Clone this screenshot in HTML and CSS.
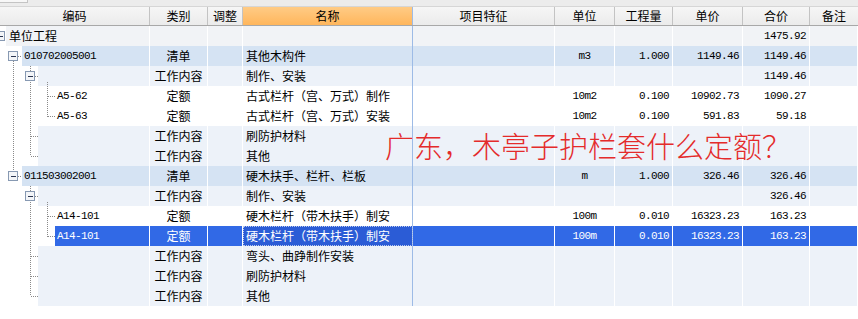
FILE: index.html
```html
<!DOCTYPE html>
<html lang="zh-CN">
<head>
    <meta charset="UTF-8">
    <title>分部分项</title>
    <link rel="stylesheet" href="styles.css">
</head>
<body>
    <div class="topbar"><span class="tab"></span></div>
    <div class="head">
        <div class="h">编码</div>
        <div class="h">类别</div>
        <div class="h">调整</div>
        <div class="h name">名称</div>
        <div class="h">项目特征</div>
        <div class="h">单位</div>
        <div class="h">工程量</div>
        <div class="h">单价</div>
        <div class="h">合价</div>
        <div class="h">备注</div>
    </div>

    <div class="grid">
        <div class="row root">
            <div class="c code"><span class="cv in0 big">单位工程</span></div>
            <div class="c"></div><div class="c"></div><div class="c name"></div><div class="c"></div>
            <div class="c"></div><div class="c"></div><div class="c"></div>
            <div class="c num">1475.92</div><div class="c"></div>
        </div>
        <div class="row qd">
            <div class="c code"><span class="cv in1 mono">010702005001</span></div>
            <div class="c mid">清单</div><div class="c"></div><div class="c name">其他木构件</div><div class="c"></div>
            <div class="c mid mono">m3</div><div class="c num">1.000</div><div class="c num">1149.46</div>
            <div class="c num">1149.46</div><div class="c"></div>
        </div>
        <div class="row gz">
            <div class="c code"><span class="cv in2"></span></div>
            <div class="c mid">工作内容</div><div class="c"></div><div class="c name">制作、安装</div><div class="c"></div>
            <div class="c"></div><div class="c"></div><div class="c"></div>
            <div class="c num">1149.46</div><div class="c"></div>
        </div>
        <div class="row de">
            <div class="c code"><span class="cv in3 mono">A5-62</span></div>
            <div class="c mid">定额</div><div class="c"></div><div class="c name">古式栏杆（宫、万式）制作</div><div class="c"></div>
            <div class="c mid mono">10m2</div><div class="c num">0.100</div><div class="c num">10902.73</div>
            <div class="c num">1090.27</div><div class="c"></div>
        </div>
        <div class="row de">
            <div class="c code"><span class="cv in3 mono">A5-63</span></div>
            <div class="c mid">定额</div><div class="c"></div><div class="c name">古式栏杆（宫、万式）安装</div><div class="c"></div>
            <div class="c mid mono">10m2</div><div class="c num">0.100</div><div class="c num">591.83</div>
            <div class="c num">59.18</div><div class="c"></div>
        </div>
        <div class="row gz">
            <div class="c code"><span class="cv in2"></span></div>
            <div class="c mid">工作内容</div><div class="c"></div><div class="c name">刷防护材料</div><div class="c"></div>
            <div class="c"></div><div class="c"></div><div class="c"></div><div class="c"></div><div class="c"></div>
        </div>
        <div class="row gz">
            <div class="c code"><span class="cv in2"></span></div>
            <div class="c mid">工作内容</div><div class="c"></div><div class="c name">其他</div><div class="c"></div>
            <div class="c"></div><div class="c"></div><div class="c"></div><div class="c"></div><div class="c"></div>
        </div>
        <div class="row qd">
            <div class="c code"><span class="cv in1 mono">011503002001</span></div>
            <div class="c mid">清单</div><div class="c"></div><div class="c name">硬木扶手、栏杆、栏板</div><div class="c"></div>
            <div class="c mid mono">m</div><div class="c num">1.000</div><div class="c num">326.46</div>
            <div class="c num">326.46</div><div class="c"></div>
        </div>
        <div class="row gz">
            <div class="c code"><span class="cv in2"></span></div>
            <div class="c mid">工作内容</div><div class="c"></div><div class="c name">制作、安装</div><div class="c"></div>
            <div class="c"></div><div class="c"></div><div class="c"></div>
            <div class="c num">326.46</div><div class="c"></div>
        </div>
        <div class="row de">
            <div class="c code"><span class="cv in3 mono">A14-101</span></div>
            <div class="c mid">定额</div><div class="c"></div><div class="c name">硬木栏杆（带木扶手）制安</div><div class="c"></div>
            <div class="c mid mono">100m</div><div class="c num">0.010</div><div class="c num">16323.23</div>
            <div class="c num">163.23</div><div class="c"></div>
        </div>
        <div class="row de sel">
            <div class="c code"><span class="cv in3 mono">A14-101</span></div>
            <div class="c mid">定额</div><div class="c"></div><div class="c name focus">硬木栏杆（带木扶手）制安</div><div class="c"></div>
            <div class="c mid mono">100m</div><div class="c num">0.010</div><div class="c num">16323.23</div>
            <div class="c num">163.23</div><div class="c"></div>
        </div>
        <div class="row gz">
            <div class="c code"><span class="cv in2"></span></div>
            <div class="c mid">工作内容</div><div class="c"></div><div class="c name">弯头、曲踭制作安装</div><div class="c"></div>
            <div class="c"></div><div class="c"></div><div class="c"></div><div class="c"></div><div class="c"></div>
        </div>
        <div class="row gz">
            <div class="c code"><span class="cv in2"></span></div>
            <div class="c mid">工作内容</div><div class="c"></div><div class="c name">刷防护材料</div><div class="c"></div>
            <div class="c"></div><div class="c"></div><div class="c"></div><div class="c"></div><div class="c"></div>
        </div>
        <div class="row gz">
            <div class="c code"><span class="cv in2"></span></div>
            <div class="c mid">工作内容</div><div class="c"></div><div class="c name">其他</div><div class="c"></div>
            <div class="c"></div><div class="c"></div><div class="c"></div><div class="c"></div><div class="c"></div>
        </div>

        <!-- tree lines and +/- boxes over the code column -->
        <svg class="tree" width="60" height="280" viewBox="0 0 60 280">
            <path class="dots" d="M13.5 35V145 M18 30.5H22 M18 150.5H22
                M30.5 40V130 M35 50.5H38 M30.5 110.5H38 M30.5 130.5H38
                M47.5 56V90.5 M47.5 70.5H55 M47.5 90.5H55
                M30.5 160V270 M35 170.5H38 M30.5 230.5H38 M30.5 250.5H38 M30.5 270.5H38
                M47.5 176V210.5 M47.5 190.5H55 M47.5 210.5H55"/>
            <g class="box">
                <rect x="-4.5" y="5.5" width="9" height="9"/>
                <rect x="8.5" y="25.5" width="9" height="9"/>
                <rect x="25.5" y="45.5" width="9" height="9"/>
                <rect x="8.5" y="145.5" width="9" height="9"/>
                <rect x="25.5" y="165.5" width="9" height="9"/>
            </g>
            <path class="minus" d="M-2 10.5H3 M11 30.5H16 M28 50.5H33 M11 150.5H16 M28 170.5H33"/>
        </svg>

        <div class="ask">广东，木亭子护栏套什么定额？</div>
    </div>
</body>
</html>
```

FILE: styles.css
```css
body {
    margin: 0;
    width: 858px;
    height: 319px;
    overflow: hidden;
    background: #fff;
    font-family: "Noto Sans CJK SC", sans-serif;
    font-size: 12px;
    color: #000;
}
.topbar {
    height: 6px;
    background: #ececec;
}
.tab {
    display: block;
    width: 27px;
    height: 2px;
    background: #f7f7f7;
    border-right: 1px solid #c4c4c4;
    border-bottom: 1px solid #c4c4c4;
}
.head, .row {
    display: grid;
    grid-template-columns: 150px 58px 35px 170px 142px 60px 58px 70px 67px 48px;
}
.head {
    height: 20px;
    box-sizing: border-box;
    border-top: 1px solid #d6d6d6;
    border-bottom: 1px solid #a8a8a8;
    background: linear-gradient(#f6f6f6, #ebebeb);
}
.h {
    display: flex;
    align-items: center;
    justify-content: center;
    border-right: 1px solid #c3c3c3;
    font-size: 12px;
    line-height: 18px;
}
.h.name {
    background: linear-gradient(#ffcb85, #ffb65c);
    border-right-color: #9dbbe6;
}
.h:last-child {
    border-right: none;
}

/* body rows */
.grid {
    position: relative;
}
.row {
    height: 20px;
    --bg: #fff;
    --fg: #000;
}
.root { --bg: #f1f3f6; }
.qd   { --bg: #d5e3f3; }
.gz   { --bg: #edf2f9; }
.de   { --bg: #fff; }
.sel  { --bg: #3169e6; --fg: #fff; }

.c {
    display: flex;
    align-items: center;
    box-sizing: border-box;
    background: var(--bg);
    color: var(--fg);
    border-right: 1px solid #fff;
    white-space: nowrap;
    overflow: hidden;
    line-height: 20px;
}
.c.code {
    background: transparent;
}
.c.name {
    padding-left: 3px;
    border-right-color: #9dbbe6;
}
.c.focus {
    background: #2b5cd6;
    outline: 1px dotted #b8c8ee;
    outline-offset: -1px;
}
.c.mid {
    justify-content: center;
}
.c.num {
    justify-content: flex-end;
    padding-right: 3px;
    font-family: "Liberation Mono", monospace;
    font-size: 11px;
    letter-spacing: -0.6px;
}
.mono {
    font-family: "Liberation Mono", monospace;
    font-size: 11px;
    letter-spacing: -0.6px;
}
.cv {
    flex: 1;
    height: 20px;
    display: flex;
    align-items: center;
    padding-left: 2px;
    background: var(--bg);
    color: var(--fg);
}
.in0 { margin-left: 6px; padding-left: 3px; }
.in1 { margin-left: 22px; }
.in2 { margin-left: 38px; }
.in3 { margin-left: 55px; }
.de .cv { background: transparent; }
.sel .cv { background: var(--bg); }
.big {
    font-size: 12px;
}

.tree {
    position: absolute;
    left: 0;
    top: 0;
    overflow: visible;
    pointer-events: none;
}
.tree .dots {
    fill: none;
    stroke: #8a8a8a;
    stroke-width: 1;
    stroke-dasharray: 1 1;
    shape-rendering: crispEdges;
}
.tree .box rect {
    fill: #f3f5f8;
    stroke: #8799b2;
    stroke-width: 1;
    shape-rendering: crispEdges;
}
.tree .minus {
    stroke: #2a3550;
    stroke-width: 1;
    shape-rendering: crispEdges;
}

/* red question written over the grid */
.ask {
    position: absolute;
    left: 385px;
    top: 105px;
    font-size: 29px;
    line-height: 29px;
    font-weight: 300;
    color: #e42b2b;
    white-space: nowrap;
}
```
